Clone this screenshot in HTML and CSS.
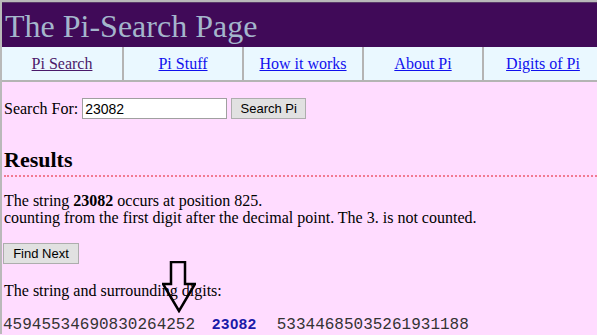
FILE: index.html
```html
<!DOCTYPE html>
<html>
<head>
<title>The Pi-Search Page</title>
<meta charset="UTF-8">
<link rel="stylesheet" href="styles.css">
</head>
<body>

<div class="page">
  <div class="masthead">
    <h1>The Pi-Search Page</h1>
  </div>

  <div class="nav">
    <div class="navcell"><a href="#" class="seen">Pi Search</a></div>
    <div class="navcell"><a href="#">Pi Stuff</a></div>
    <div class="navcell"><a href="#">How it works</a></div>
    <div class="navcell"><a href="#">About Pi</a></div>
    <div class="navcell"><a href="#">Digits of Pi</a></div>
  </div>

  <div class="content">
    <form class="search">
      <label for="q">Search For:</label>
      <input type="text" id="q" value="23082">
      <button type="button">Search Pi</button>
    </form>

    <h2 class="results">Results</h2>

    <p class="found">The string <b>23082</b> occurs at position 825.<br>
    counting from the first digit after the decimal point. The 3. is not counted.</p>

    <button type="button" class="next">Find Next</button>

    <div class="around">
      <p class="caption">The string and surrounding digits:</p>
      <div class="digits">45945534690830264252<span class="hit">23082</span>53344685035261931188</div>
      <svg class="arrow" width="34" height="52" viewBox="0 0 34 52">
        <path d="M9 1 H23 V23 H33 L17 50 L1 23 H9 Z" fill="none" stroke="#000" stroke-width="2.5" stroke-linejoin="miter"/>
      </svg>
    </div>
  </div>
</div>

</body>
</html>
```

FILE: styles.css
```css
html {
  overflow: hidden;
}
body {
  margin: 0;
  background: #ffdcff;
  font-family: "Liberation Serif", "Times New Roman", serif;
  font-size: 16px;
  color: #000;
}
.page {
  width: 604px;
  border-top: 2px solid #b9b9b9;
  border-left: 2px solid #b9b9b9;
}
.masthead {
  background: #400a58;
  height: 44px;
  border-top: 1px solid #5a3a6a;
}
.masthead h1 {
  margin: 0;
  padding: 7px 0 0 3px;
  font-weight: normal;
  font-size: 32px;
  line-height: 32px;
  color: #a4b6cc;
}
.nav {
  display: flex;
  background: #eaf8ff;
  border-bottom: 2px solid #b4b4b4;
}
.navcell {
  width: 118px;
  height: 33px;
  display: flex;
  align-items: center;
  justify-content: center;
  border-left: 2px solid #b4b4b4;
}
.navcell:first-child {
  border-left: 0;
  width: 120px;
}
.nav a {
  color: #1010ee;
  padding-top: 1px;
}
.nav a.seen {
  color: #4a1a6a;
}
.content {
  padding: 0 1px;
}
.search {
  margin: 16px 0 0 1px;
  display: flex;
  align-items: center;
}
.search input {
  margin: 0 4px 0 4px;
  width: 139px;
  height: 15px;
  padding: 2px 2px;
  border: 1px solid #a0a0a0;
  font-family: "Liberation Sans", Arial, sans-serif;
  font-size: 14px;
  background: #fff;
}
button {
  font-family: "Liberation Sans", Arial, sans-serif;
  font-size: 13px;
  color: #000;
  background: #e1e1e1;
  border: 1px solid #adadad;
  height: 21px;
  padding: 0 8px;
  margin: 0;
}
.search button {
  width: 75px;
  padding: 0;
}
.results {
  margin: 28px 0 0 1px;
  font-size: 22px;
  line-height: 26px;
  padding-bottom: 2px;
  border-bottom: 2px dotted #f27a92;
}
.found {
  margin: 15px 0 0 1px;
  line-height: 17px;
}
.next {
  margin-top: 17px;
  width: 76px;
  padding: 0;
}
.around {
  position: relative;
}
.caption {
  margin: 18px 0 0 1px;
  line-height: 18px;
}
.digits {
  margin-top: 15px;
  font-family: "Liberation Mono", "Courier New", monospace;
  font-size: 16px;
  line-height: 18px;
  color: #333;
  white-space: nowrap;
}
.hit {
  margin: 0 20px 0 17px;
  font-family: "Liberation Sans", Arial, sans-serif;
  font-weight: bold;
  font-size: 15px;
  letter-spacing: 0.6px;
  color: #1a1aa8;
}
.arrow {
  position: absolute;
  left: 159px;
  top: -21px;
}
```
